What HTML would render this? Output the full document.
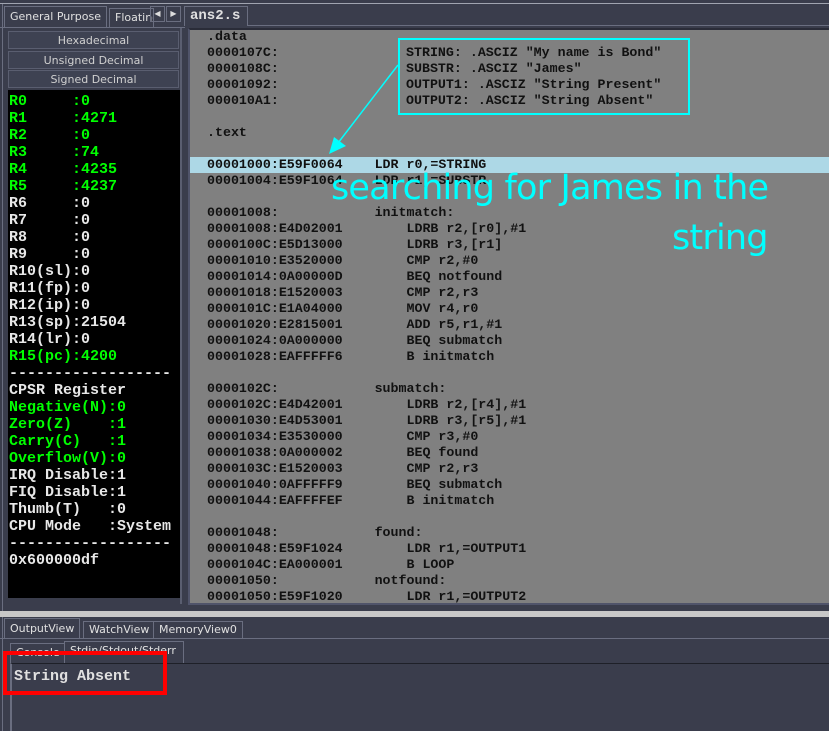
<!DOCTYPE html>
<html><head><meta charset="utf-8"><style>
*{margin:0;padding:0;box-sizing:border-box}
body{width:829px;height:731px;background:#3a3d4c;position:relative;overflow:hidden;font-family:"DejaVu Sans","Liberation Sans",sans-serif}
.a{position:absolute}
.mono{font-family:"Liberation Mono","DejaVu Sans Mono",monospace;font-weight:bold}
.tab{position:absolute;border:1px solid #6a6e80;border-bottom:none;color:#e0e0e0;font-size:11px;padding:0 5px;line-height:18px;background:#3a3d4c}
.btn{position:absolute;left:8px;width:171px;height:18px;border:1px solid #5a5e70;background:#3e4252;color:#d0d0d0;font-size:11px;text-align:center;line-height:17px}
.reg div{height:17px;line-height:17px;white-space:pre}
.w{color:#e8e8e8}
.code div{height:16px;line-height:16px;white-space:pre;position:absolute}
</style></head><body>
<div class="a" style="left:0;top:0;width:829px;height:4px;border-bottom:1px solid #a0a4b0"></div>
<div class="a" style="left:2px;top:4px;width:1px;height:727px;background:#6a6e80"></div>
<div class="tab" style="left:4px;top:6px;height:22px;font-size:11px;line-height:20px">General Purpose</div>
<div class="tab" style="left:109px;top:8px;height:19px;width:45px;overflow:hidden">Floating</div>
<div class="a" style="left:150px;top:6px;width:15px;height:16px;border:1px solid #6a6e80;color:#ddd;font-size:8px;text-align:center;line-height:14px">◀</div>
<div class="a" style="left:166px;top:6px;width:15px;height:16px;border:1px solid #6a6e80;color:#ddd;font-size:8px;text-align:center;line-height:14px">▶</div>
<div class="a" style="left:0;top:27px;width:185px;height:1px;background:#6a6e80"></div>
<div class="tab mono" style="left:184px;top:6px;height:20px;width:64px;font-size:14px;line-height:18px;font-weight:bold">ans2.s</div>
<div class="a" style="left:248px;top:25px;width:581px;height:1px;background:#6a6e80"></div>
<div class="btn" style="top:31px">Hexadecimal</div>
<div class="btn" style="top:51px">Unsigned Decimal</div>
<div class="btn" style="top:70px">Signed Decimal</div>
<div class="a" style="left:8px;top:90px;width:172px;height:508px;background:#000"></div>
<div class="a" style="left:180px;top:28px;width:2px;height:576px;background:#5a5e70"></div>
<div class="a reg mono" style="left:9px;top:93px;font-size:15px;color:#00ff00">
<div>R0     :0</div><div>R1     :4271</div><div>R2     :0</div><div>R3     :74</div><div>R4     :4235</div><div>R5     :4237</div>
<div class="w">R6     :0</div><div class="w">R7     :0</div><div class="w">R8     :0</div><div class="w">R9     :0</div><div class="w">R10(sl):0</div><div class="w">R11(fp):0</div><div class="w">R12(ip):0</div>
<div class="w">R13(sp):21504</div><div class="w">R14(lr):0</div><div>R15(pc):4200</div>
<div class="w">------------------</div><div class="w">CPSR Register</div>
<div>Negative(N):0</div><div>Zero(Z)    :1</div><div>Carry(C)   :1</div><div>Overflow(V):0</div>
<div class="w">IRQ Disable:1</div><div class="w">FIQ Disable:1</div><div class="w">Thumb(T)   :0</div><div class="w">CPU Mode   :System</div><div class="w">------------------</div><div class="w">0x600000df</div>
</div>
<div class="a" style="left:188px;top:28px;width:641px;height:577px;background:#808080;border-left:2px solid #50546a;border-top:2px solid #2a2c38;border-bottom:2px solid #50546a"></div>
<div class="a" style="left:190px;top:157px;width:639px;height:16px;background:#add8e6"></div>
<div class="a code mono" style="left:0;top:1px;font-size:13.3px;color:#111">
<div style="left:207px;top:28px">.data</div>
<div style="left:207px;top:44px">0000107C:</div>
<div style="left:207px;top:60px">0000108C:</div>
<div style="left:207px;top:76px">00001092:</div>
<div style="left:207px;top:92px">000010A1:</div>
<div style="left:406px;top:44px">STRING: .ASCIZ "My name is Bond"</div>
<div style="left:406px;top:60px">SUBSTR: .ASCIZ "James"</div>
<div style="left:406px;top:76px">OUTPUT1: .ASCIZ "String Present"</div>
<div style="left:406px;top:92px">OUTPUT2: .ASCIZ "String Absent"</div>
<div style="left:207px;top:124px">.text</div>
<div style="left:207px;top:156px">00001000:E59F0064    LDR r0,=STRING</div>
<div style="left:207px;top:172px">00001004:E59F1064    LDR r1,=SUBSTR</div>
<div style="left:207px;top:204px">00001008:            initmatch:</div>
<div style="left:207px;top:220px">00001008:E4D02001        LDRB r2,[r0],#1</div>
<div style="left:207px;top:236px">0000100C:E5D13000        LDRB r3,[r1]</div>
<div style="left:207px;top:252px">00001010:E3520000        CMP r2,#0</div>
<div style="left:207px;top:268px">00001014:0A00000D        BEQ notfound</div>
<div style="left:207px;top:284px">00001018:E1520003        CMP r2,r3</div>
<div style="left:207px;top:300px">0000101C:E1A04000        MOV r4,r0</div>
<div style="left:207px;top:316px">00001020:E2815001        ADD r5,r1,#1</div>
<div style="left:207px;top:332px">00001024:0A000000        BEQ submatch</div>
<div style="left:207px;top:348px">00001028:EAFFFFF6        B initmatch</div>
<div style="left:207px;top:380px">0000102C:            submatch:</div>
<div style="left:207px;top:396px">0000102C:E4D42001        LDRB r2,[r4],#1</div>
<div style="left:207px;top:412px">00001030:E4D53001        LDRB r3,[r5],#1</div>
<div style="left:207px;top:428px">00001034:E3530000        CMP r3,#0</div>
<div style="left:207px;top:444px">00001038:0A000002        BEQ found</div>
<div style="left:207px;top:460px">0000103C:E1520003        CMP r2,r3</div>
<div style="left:207px;top:476px">00001040:0AFFFFF9        BEQ submatch</div>
<div style="left:207px;top:492px">00001044:EAFFFFEF        B initmatch</div>
<div style="left:207px;top:524px">00001048:            found:</div>
<div style="left:207px;top:540px">00001048:E59F1024        LDR r1,=OUTPUT1</div>
<div style="left:207px;top:556px">0000104C:EA000001        B LOOP</div>
<div style="left:207px;top:572px">00001050:            notfound:</div>
<div style="left:207px;top:588px">00001050:E59F1020        LDR r1,=OUTPUT2</div>
</div>
<div class="a" style="left:398px;top:38px;width:292px;height:77px;border:2px solid #00ffff"></div>
<svg class="a" style="left:0;top:0" width="829" height="731"><line x1="398" y1="65" x2="338" y2="143" stroke="#00ffff" stroke-width="1.5"/><polygon points="329,154 334,137 346,146" fill="#00ffff"/></svg>
<div class="a" style="left:331px;top:168px;color:#00ffff;font-size:35px;font-family:'DejaVu Sans',sans-serif;white-space:nowrap;line-height:40px;letter-spacing:-0.8px">searching for James in the</div>
<div class="a" style="left:672px;top:218px;color:#00ffff;font-size:35px;font-family:'DejaVu Sans',sans-serif;white-space:nowrap;line-height:40px;letter-spacing:-0.8px">string</div>
<div class="a" style="left:0;top:611px;width:829px;height:6px;background:#c8c8c8"></div>
<div class="tab" style="left:4px;top:618px;height:21px;line-height:19px">OutputView</div>
<div class="tab" style="left:83px;top:621px;height:18px;line-height:16px">WatchView</div>
<div class="tab" style="left:153px;top:621px;height:18px;line-height:16px">MemoryView0</div>
<div class="a" style="left:0;top:638px;width:829px;height:1px;background:#6a6e80"></div>
<div class="tab" style="left:10px;top:643px;height:20px;line-height:18px">Console</div>
<div class="tab" style="left:64px;top:641px;height:22px;line-height:18px;width:120px;overflow:hidden">Stdin/Stdout/Stderr</div>
<div class="a" style="left:10px;top:663px;width:819px;height:68px;border-left:2px solid #6a6e80;border-top:1px solid #1e2028;background:#3a3d4c"></div>
<div class="a mono" style="left:14px;top:668px;font-size:15px;color:#e0e0e0">String Absent</div>
<div class="a" style="left:3px;top:651px;width:164px;height:44px;border:4px solid #ff0000"></div>
</body></html>
